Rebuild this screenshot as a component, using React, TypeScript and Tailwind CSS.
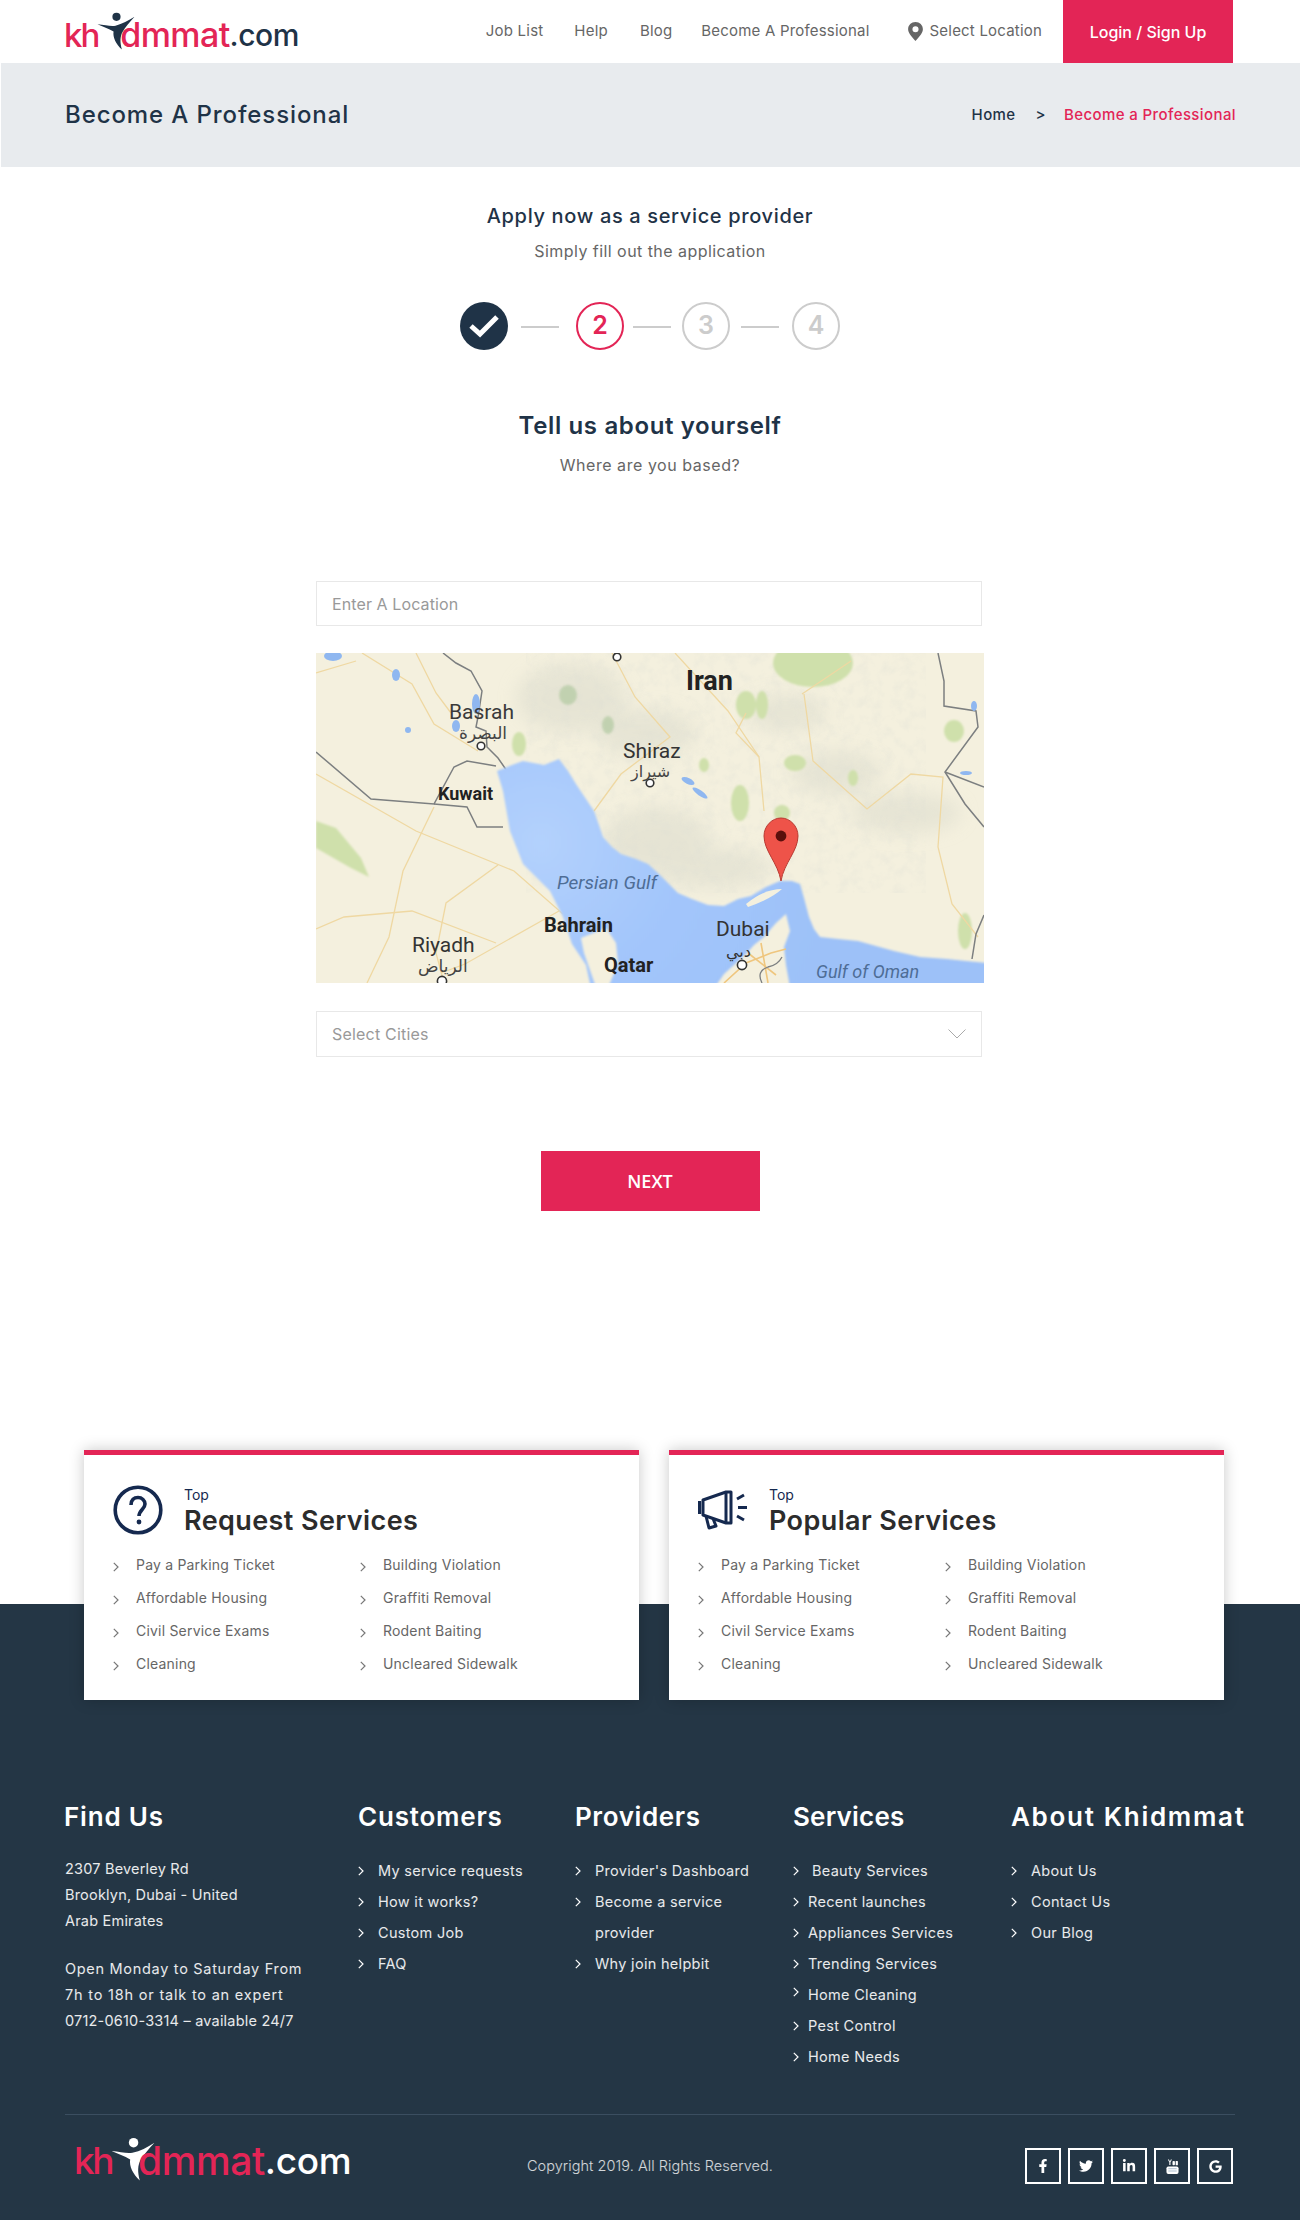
import { FaFacebookF, FaGoogle, FaLinkedinIn, FaTwitter } from "react-icons/fa";

const requestRows = [
  ["Pay a Parking Ticket", "Building Violation"],
  ["Affordable Housing", "Graffiti Removal"],
  ["Civil Service Exams", "Rodent Baiting"],
  ["Cleaning", "Uncleared Sidewalk"],
];

const Chevron = ({ className }: { className: string }) => (
  <svg viewBox="0 0 6 10" className={className} fill="none" stroke="currentColor" strokeWidth="1.2">
    <path d="M0.8 0.8 L5 5 L0.8 9.2" />
  </svg>
);

const Figure = ({ className, fill }: { className: string; fill: string }) => (
  <svg viewBox="0 0 39 39" className={className} fill={fill}>
    <circle cx="20" cy="5" r="4.2" />
    <path d="M0.5 12.5 C8 13 14 15 19 14 C26 12.5 32 9 38.5 5 C33 11 29 16 26.5 20 C23.5 25 23.5 31 25.5 38.5 C19.5 33 16 26 17 20 C12 17 6 15 0.5 12.5Z" />
  </svg>
);

const HeaderLogo = () => (
  <div className="flex items-end h-[44px] font-['Inter',sans-serif] leading-[38px] font-medium">
    <span className="text-[#e32556] text-[33px] tracking-[-2px]">kh</span>
    <Figure className="w-[38px] h-[38px] -ml-[1px] mb-[4px] shrink-0" fill="#1f3347" />
    <span className="text-[#e32556] text-[34px] tracking-[-0.6px] -ml-[15px]">dmmat</span>
    <span className="text-[#1f3347] text-[30px] tracking-[-0.5px]">.com</span>
  </div>
);

const FooterLogo = () => (
  <div className="w-[276px] shrink-0 flex items-end h-[44px] font-['Inter',sans-serif] leading-[42px] font-medium">
    <span className="text-[#e32556] text-[37px] tracking-[-2.5px]">kh</span>
    <Figure className="w-[44px] h-[44px] -ml-[1px] mb-[1px] shrink-0" fill="#ffffff" />
    <span className="text-[#e32556] text-[39px] tracking-[-0.4px] -ml-[17px]">dmmat</span>
    <span className="text-white text-[37px] tracking-[-0.3px]">.com</span>
  </div>
);

const QuestionIcon = () => (
  <svg viewBox="0 0 50 50" className="w-[50px] h-[50px] shrink-0" fill="none" stroke="#15294f">
    <circle cx="25" cy="25" r="22.8" strokeWidth="3.6" />
    <path d="M18 20 C18 15 21 12.5 25 12.5 C29 12.5 32 15.5 32 19 C32 24 26 25 26 31" strokeWidth="3.6" />
    <circle cx="26" cy="37" r="2.4" fill="#15294f" stroke="none" />
  </svg>
);

const MegaphoneIcon = () => (
  <svg viewBox="0 0 50 40" className="w-[50px] h-[50px] shrink-0" fill="none" stroke="#15294f" strokeWidth="3" strokeLinejoin="round">
    <path d="M1.5 11 V24" strokeWidth="3.4" />
    <path d="M5 10 L28 2 H33 V33 H28 L5 25 Z" />
    <path d="M28 2 V33" />
    <path d="M8 26 L11 38 L18 36 L15 28.5" />
    <path d="M39 9 L46 5 M40 17.5 H49 M39 26 L46 30" strokeWidth="3" />
  </svg>
);

const YoutubeIcon = () => (
  <svg viewBox="0 0 14 16" className="w-[13px] h-[15px]" fill="#ffffff">
    <rect x="0.5" y="8" width="13" height="8" rx="2" />
    <path d="M2 0.5 L3.6 3.5 V6.5 H4.8 V3.5 L6.4 0.5 H5.2 L4.2 2.5 L3.2 0.5Z" />
    <rect x="7" y="2" width="2.6" height="4.6" rx="1" />
    <rect x="10.4" y="2" width="2.4" height="4.6" rx="0.6" />
    <rect x="2.5" y="10" width="9" height="0.9" fill="#9fb4c8" />
    <rect x="2.5" y="12.4" width="9" height="0.9" fill="#9fb4c8" />
  </svg>
);

const ServiceMap = () => (
  <svg viewBox="0 0 668 330" className="w-[668px] h-[330px] block">
    <defs>
      <radialGradient id="sea" gradientUnits="userSpaceOnUse" cx="225" cy="190" r="300">
        <stop offset="0" stopColor="#b3d1fd" />
        <stop offset="0.45" stopColor="#a3c6fb" />
        <stop offset="1" stopColor="#9dc1f8" />
      </radialGradient>
      <filter id="soft"><feGaussianBlur stdDeviation="9" /></filter>
      <filter id="softer"><feGaussianBlur stdDeviation="1.2" /></filter>
      <filter id="edge"><feGaussianBlur stdDeviation="0.8" /></filter>
      <filter id="mottle" x="0" y="0" width="100%" height="100%">
        <feTurbulence type="fractalNoise" baseFrequency="0.09" numOctaves="3" seed="4" />
        <feColorMatrix values="0 0 0 0 0.72  0 0 0 0 0.73  0 0 0 0 0.66  1.8 0 0 0 -0.75" />
      </filter>
    </defs>
    <rect width="668" height="330" fill="#f4f0de" />
    {/* terrain */}
    <g filter="url(#soft)" fill="#dcdccd" opacity="0.55">
      <ellipse cx="255" cy="45" rx="55" ry="35" />
      <ellipse cx="330" cy="80" rx="50" ry="24" />
      <ellipse cx="340" cy="190" rx="55" ry="36" />
      <ellipse cx="395" cy="215" rx="60" ry="20" />
      <ellipse cx="520" cy="120" rx="45" ry="22" />
      <ellipse cx="590" cy="160" rx="55" ry="20" />
      <ellipse cx="470" cy="60" rx="40" ry="18" />
    </g>
    <rect x="210" y="0" width="400" height="240" filter="url(#mottle)" opacity="0.35" />
    <g filter="url(#softer)" fill="#cfe0ab">
      <ellipse cx="497" cy="10" rx="40" ry="24" />
      <path d="M0 168 L20 175 L45 205 L53 224 L35 215 L0 195Z" />
      <ellipse cx="430" cy="52" rx="10" ry="14" />
      <ellipse cx="446" cy="52" rx="6" ry="14" />
      <ellipse cx="424" cy="150" rx="9" ry="18" />
      <ellipse cx="479" cy="110" rx="11" ry="8" />
      <ellipse cx="537" cy="125" rx="5" ry="8" />
      <ellipse cx="638" cy="78" rx="10" ry="11" />
      <ellipse cx="649" cy="278" rx="7" ry="18" />
      <ellipse cx="203" cy="91" rx="7" ry="12" />
      <ellipse cx="466" cy="160" rx="8" ry="8" />
      <ellipse cx="388" cy="112" rx="5" ry="7" />
    </g>
    <g filter="url(#softer)" fill="#b9cda8" opacity="0.8">
      <ellipse cx="252" cy="42" rx="9" ry="10" />
      <ellipse cx="292" cy="72" rx="6" ry="9" />
    </g>
    {/* roads */}
    <g fill="none" stroke="#efd8a2" strokeWidth="1.3">
      <path d="M46 0 L96 31 L118 71 L162 98" />
      <path d="M0 121 L100 178 L198 218 L247 261" />
      <path d="M118 154 L87 218 L73 284 L51 330" />
      <path d="M0 276 L28 264 L96 258 L180 290" />
      <path d="M182 212 L130 250 L120 300 L128 330" />
      <path d="M243 258 L149 311 L125 320" />
      <path d="M296 0 L319 44 L354 84 L305 121 L278 158" />
      <path d="M359 0 L412 58 L443 104 L448 158" />
      <path d="M443 104 L420 80 L430 60" />
      <path d="M488 41 L497 108 L551 156 L595 121 L627 124 L622 194 L636 251 L662 284" />
      <path d="M486 41 L535 8" />
      <path d="M100 0 L120 40 L135 60" />
      <path d="M0 20 L40 8" />
    </g>
    {/* borders */}
    <g fill="none" stroke="#7c7f80" strokeWidth="1.5">
      <path d="M127 0 L140 10 L155 18 L166 38 L162 64 L160 74 L170 78 L171 94 L182 105 L191 118" />
      <path d="M0 99 L55 146 L118 151 L138 114 L151 108 L180 113" />
      <path d="M118 151 L151 154 L161 174 L187 174" />
      <path d="M622 0 L628 28 L628 53 L660 58 L662 74 L629 119 L649 151 L668 174" />
      <path d="M629 119 L668 134" />
      <path d="M668 262 L660 281 L656 306" />
    </g>
    {/* water */}
    <path
      fill="url(#sea)"
      filter="url(#edge)"
      d="M181 118 L196 112 L207 108 L228 112 L243 106 L252 118 L260 131 L270 146 L278 158 L283 172 L287 184 L296 194 L305 201 L320 206 L332 211 L342 220 L350 228 L362 240 L376 246 L392 252 L408 253 L422 246 L435 243 L450 234 L464 228 L476 228 L484 231 L488 245 L493 264 L498 276 L504 284 L522 286 L542 288 L560 293 L578 298 L604 304 L631 306 L650 308 L680 311 L680 340 L475 340 L470 312 L468 294 L474 278 L470 261 L460 270 L448 284 L438 292 L430 301 L418 312 L408 321 L395 340 L290 340 L302 310 L300 290 L290 275 L265 285 L268 300 L282 340 L276 340 L270 312 L256 291 L247 264 L234 238 L207 211 L194 178 L187 138Z"
    />
    <path d="M430 251 Q448 236 466 236 Q455 246 432 254Z" fill="#f4f0de" />
    <g fill="#8fb7f0">
      <ellipse cx="372" cy="128" rx="7" ry="3" transform="rotate(25 372 128)" />
      <ellipse cx="384" cy="140" rx="9" ry="2.6" transform="rotate(35 384 140)" />
      <ellipse cx="160" cy="51" rx="4" ry="10" />
      <ellipse cx="140" cy="73" rx="4" ry="6" />
      <ellipse cx="80" cy="22" rx="4" ry="6" />
      <ellipse cx="17" cy="3" rx="9" ry="5" />
      <ellipse cx="658" cy="53" rx="3" ry="5" />
      <ellipse cx="92" cy="77" rx="3" ry="3" />
      <ellipse cx="650" cy="120" rx="6" ry="2" />
    </g>
    {/* uae roads */}
    <g fill="none" stroke="#efc67e" strokeWidth="1.6">
      <path d="M408 330 L430 310 L455 300 L470 296" />
      <path d="M432 300 L460 322" />
      <path d="M445 290 L452 330" />
    </g>
    <path d="M446 330 Q440 318 452 314 Q462 312 466 304" fill="none" stroke="#7c7f80" strokeWidth="1.3" />
    {/* cities */}
    <g fill="#ffffff" stroke="#333333" strokeWidth="1.6">
      <circle cx="301" cy="4" r="3.8" />
      <circle cx="165" cy="93" r="3.8" />
      <circle cx="334" cy="130" r="3.8" />
      <circle cx="426" cy="312" r="4.6" />
      <circle cx="126" cy="328" r="4.6" />
    </g>
    {/* labels */}
    <g className="font-['Roboto',sans-serif]" fill="#333333">
      <text x="370" y="37" fontSize="27" fontWeight="700" fill="#222222">Iran</text>
      <text x="133" y="66" fontSize="21" fill="#3a3a3a">Basrah</text>
      <text x="143" y="86" fontSize="17" fill="#444444" className="font-['DejaVu_Sans',sans-serif]">البصرة</text>
      <text x="307" y="105" fontSize="21">Shiraz</text>
      <text x="315" y="124" fontSize="16" fill="#444444" className="font-['DejaVu_Sans',sans-serif]">شيراز</text>
      <text x="122" y="147" fontSize="18" fontWeight="700" fill="#222222">Kuwait</text>
      <text x="241" y="236" fontSize="19" fontStyle="italic" fill="#4e6d96">Persian Gulf</text>
      <text x="228" y="279" fontSize="20" fontWeight="700" fill="#222222">Bahrain</text>
      <text x="400" y="283" fontSize="21">Dubai</text>
      <text x="410" y="304" fontSize="16" className="font-['DejaVu_Sans',sans-serif]">دبي</text>
      <text x="96" y="299" fontSize="21">Riyadh</text>
      <text x="102" y="319" fontSize="17" fill="#444444" className="font-['DejaVu_Sans',sans-serif]">الرياض</text>
      <text x="288" y="319" fontSize="20" fontWeight="700" fill="#222222">Qatar</text>
      <text x="500" y="325" fontSize="18" fontStyle="italic" fill="#4e6d96">Gulf of Oman</text>
    </g>
    {/* marker */}
    <path d="M465 228 C462 210 448 198 448 183 C448 173 456 165 465 165 C474 165 482 173 482 183 C482 198 468 210 465 228Z" fill="#ee5349" stroke="#b93a32" strokeWidth="1" />
    <circle cx="465" cy="183" r="5.4" fill="#5a0f0c" />
  </svg>
);

const ServiceCard = ({ icon, title }: { icon: React.ReactNode; title: string }) => (
  <div className="w-[555px] h-[250px] bg-white border-t-[5px] border-[#e32556] pl-[29px] pt-[30px] shadow-[0_0_14px_rgba(0,0,0,0.22)]">
    <div className="flex h-[50px]">
      {icon}
      <div className="ml-[21px]">
        <p className="text-[14px] leading-[20px] text-[#15294f]">Top</p>
        <h3 className="text-[27px] leading-[32px] font-semibold text-[#2c2c2c] tracking-[0.4px]">{title}</h3>
      </div>
    </div>
    <ul className="grid grid-cols-[247px_1fr] mt-[13px]">
      {requestRows.flat().map((item, i) => (
        <li key={i} className="flex items-center h-[33px] text-[14px] tracking-[0.2px] text-[#666666]">
          <Chevron className="w-[6px] h-[10px] mt-[5px] text-[#777777] shrink-0" />
          <span className="ml-[17px]">{item}</span>
        </li>
      ))}
    </ul>
  </div>
);

type FooterLink = { label: string; gap?: string; up?: boolean; plain?: boolean };

const FooterList = ({ items }: { items: FooterLink[] }) => (
  <ul className="mt-[20px]">
    {items.map((item, i) => (
      <li key={i} className="flex items-center h-[31px] text-[14.5px] tracking-[0.3px] text-white/90">
        {!item.plain && <Chevron className={item.up ? "w-[6px] h-[10px] -mt-[5px] text-white shrink-0" : "w-[6px] h-[10px] mt-[1px] text-white shrink-0"} />}
        <span className={item.gap ?? "ml-[14px]"}>{item.label}</span>
      </li>
    ))}
  </ul>
);

const Step = ({ label, className }: { label: string; className: string }) => (
  <div className={`w-[48px] h-[48px] rounded-full border-2 flex items-center justify-center text-[25px] font-semibold ${className}`}>{label}</div>
);

const StepLine = ({ className }: { className: string }) => <div className={`w-[38px] h-[2px] bg-[#cccccc] mt-px ${className}`} />;

const App = () => {
  return (
    <div className="w-[1300px] bg-white font-['Inter',sans-serif] overflow-hidden">
      {/* top bar */}
      <header className="h-[63px] flex items-center pl-[64px] pr-[67px]">
        <HeaderLogo />
        <nav className="ml-auto flex items-center text-[15px] tracking-[0.2px] text-[#666666]">
          <a>Job List</a>
          <a className="ml-[31px]">Help</a>
          <a className="ml-[32px]">Blog</a>
          <a className="ml-[29px]">Become A Professional</a>
          <svg viewBox="0 0 14 18" className="w-[15px] h-[19px] ml-[38px]" fill="#666666">
            <path fillRule="evenodd" d="M7 0 C3 0 0 3 0 6.8 C0 11 5 15.5 7 18 C9 15.5 14 11 14 6.8 C14 3 11 0 7 0Z M7 4 A2.9 2.9 0 1 1 7 9.8 A2.9 2.9 0 1 1 7 4Z" />
          </svg>
          <span className="ml-[7px]">Select Location</span>
        </nav>
        <button className="ml-[21px] w-[170px] h-[63px] bg-[#e32556] text-white text-[16px] font-medium">Login / Sign Up</button>
      </header>

      <section className="h-[104px] ml-px bg-[#e8ebee] flex items-center justify-between pl-[64px] pr-[64px]">
        <h1 className="text-[24px] font-medium text-[#1f3347] tracking-[0.9px]">Become A Professional</h1>
        <div className="flex items-center text-[15px] font-medium tracking-[0.4px]">
          <span className="text-[#1f3347]">Home</span>
          <span className="ml-[20px] text-[#1f3347]">&gt;</span>
          <span className="ml-[18px] text-[#e32556]">Become a Professional</span>
        </div>
      </section>

      {/* application form */}
      <main className="flex flex-col items-center">
        <h2 className="mt-[34px] text-[20px] leading-[30px] font-medium text-[#1f3347] tracking-[0.65px]">Apply now as a service provider</h2>
        <p className="mt-[8px] text-[16px] leading-[24px] tracking-[0.45px] text-[#666666]">Simply fill out the application</p>

        <div className="mt-[39px] flex items-center">
          <div className="w-[48px] h-[48px] rounded-full bg-[#1f3347] flex items-center justify-center">
            <svg viewBox="0 0 30 24" className="w-[30px] h-[24px]" fill="none" stroke="#ffffff" strokeWidth="5">
              <path d="M2 12 L11 20 L28 3" />
            </svg>
          </div>
          <StepLine className="ml-[13px]" />
          <Step label="2" className="ml-[17px] border-[#e32556] text-[#e32556]" />
          <StepLine className="ml-[9px]" />
          <Step label="3" className="ml-[11px] border-[#cccccc] text-[#cccccc]" />
          <StepLine className="ml-[11px]" />
          <Step label="4" className="ml-[13px] border-[#cccccc] text-[#cccccc]" />
        </div>

        <h2 className="mt-[58px] text-[24px] leading-[36px] font-semibold text-[#1f3347] tracking-[0.64px]">Tell us about yourself</h2>
        <p className="mt-[9px] text-[16px] leading-[24px] tracking-[0.55px] text-[#666666]">Where are you based?</p>

        <div className="w-[668px] mt-[104px]">
          <div className="w-[666px] h-[45px] border border-[#e8e8e8] flex items-center pl-[15px] text-[16px] tracking-[0.1px] text-[#999999]">Enter A Location</div>
          <div className="mt-[27px]">
            <ServiceMap />
          </div>
          <div className="w-[666px] h-[46px] mt-[28px] border border-[#e8e8e8] flex items-center justify-between pl-[15px] pr-[15px] text-[16px] tracking-[0.2px] text-[#999999]">
            Select Cities
            <svg viewBox="0 0 18 10" className="w-[18px] h-[10px]" fill="none" stroke="#aaaaaa" strokeWidth="1">
              <path d="M0.5 0.5 L9 9 L17.5 0.5" />
            </svg>
          </div>
        </div>

        <button className="mt-[94px] w-[219px] h-[60px] bg-[#e32556] text-white text-[18px] font-semibold font-['Open_Sans',sans-serif]">NEXT</button>
      </main>

      {/* top service cards */}
      <section className="mt-[239px] pl-[84px] flex gap-[30px] relative z-10">
        <ServiceCard icon={<QuestionIcon />} title="Request Services" />
        <ServiceCard icon={<MegaphoneIcon />} title="Popular Services" />
      </section>

      <footer className="-mt-[96px] bg-[#243645] pt-[195px] h-[616px] text-white">
        <div className="grid grid-cols-[294px_217px_218px_218px_1fr] pl-[64px]">
          <div>
            <h4 className="text-[26px] leading-[36px] font-semibold tracking-[0.8px]">Find Us</h4>
            <div className="mt-[21px] ml-px text-[14.5px] leading-[26px] text-white/90">
              <p className="tracking-[0.2px]">2307 Beverley Rd</p>
              <p className="tracking-[0.2px]">Brooklyn, Dubai - United</p>
              <p className="tracking-[0.2px]">Arab Emirates</p>
              <p className="mt-[22px] tracking-[0.7px]">Open Monday to Saturday From</p>
              <p className="tracking-[0.8px]">7h to 18h or talk to an expert</p>
              <p className="tracking-[0.2px]">0712-0610-3314 – available 24/7</p>
            </div>
          </div>
          <div>
            <h4 className="text-[26px] leading-[36px] font-semibold tracking-[0.8px]">Customers</h4>
            <FooterList items={[{ label: "My service requests" }, { label: "How it works?" }, { label: "Custom Job" }, { label: "FAQ" }]} />
          </div>
          <div>
            <h4 className="text-[26px] leading-[36px] font-semibold tracking-[0.6px]">Providers</h4>
            <FooterList items={[{ label: "Provider's Dashboard" }, { label: "Become a service" }, { label: "provider", gap: "ml-[20px]", plain: true }, { label: "Why join helpbit" }]} />
          </div>
          <div>
            <h4 className="text-[26px] leading-[36px] font-semibold tracking-[0.2px]">Services</h4>
            <FooterList
              items={[
                { label: "Beauty Services", gap: "ml-[13px]" },
                { label: "Recent launches", gap: "ml-[9px]" },
                { label: "Appliances Services", gap: "ml-[9px]" },
                { label: "Trending Services", gap: "ml-[9px]" },
                { label: "Home Cleaning", gap: "ml-[9px]", up: true },
                { label: "Pest Control", gap: "ml-[9px]" },
                { label: "Home Needs", gap: "ml-[9px]" },
              ]}
            />
          </div>
          <div>
            <h4 className="text-[26px] leading-[36px] font-semibold whitespace-nowrap tracking-[1.7px]">About Khidmmat</h4>
            <FooterList items={[{ label: "About Us" }, { label: "Contact Us" }, { label: "Our Blog" }]} />
          </div>
        </div>

        <div className="mt-[42px] mx-[65px] h-px bg-[#3b4e60]" />

        <div className="mt-[33px] pl-[74px] pr-[67px] flex items-center h-[36px]">
          <div className="-mt-[12px]">
            <FooterLogo />
          </div>
          <p className="ml-[177px] text-[14.5px] font-light tracking-[0.05px] text-white/80">Copyright 2019. All Rights Reserved.</p>
          <div className="ml-auto flex gap-[7px]">
            <a className="w-[36px] h-[36px] border-2 border-white flex items-center justify-center text-[14px]"><FaFacebookF /></a>
            <a className="w-[36px] h-[36px] border-2 border-white flex items-center justify-center text-[14px]"><FaTwitter /></a>
            <a className="w-[36px] h-[36px] border-2 border-white flex items-center justify-center text-[14px]"><FaLinkedinIn /></a>
            <a className="w-[36px] h-[36px] border-2 border-white flex items-center justify-center"><YoutubeIcon /></a>
            <a className="w-[36px] h-[36px] border-2 border-white flex items-center justify-center text-[13px]"><FaGoogle /></a>
          </div>
        </div>
      </footer>
    </div>
  );
};

export default App;
